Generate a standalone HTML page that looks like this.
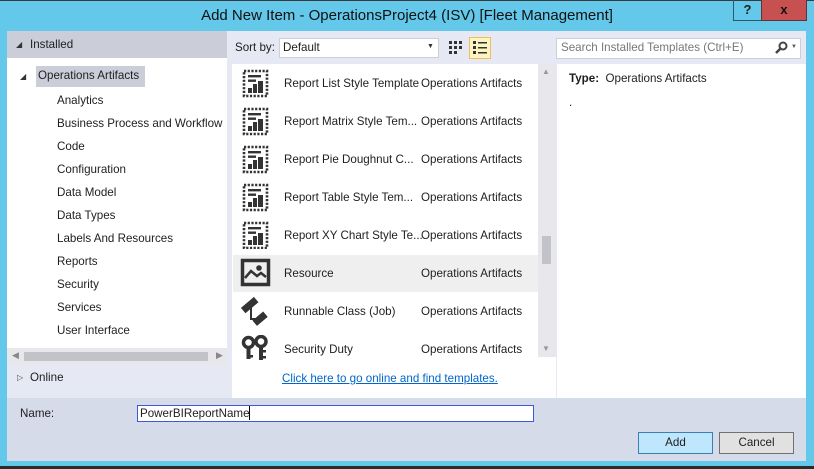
<!DOCTYPE html>
<html><head><meta charset="utf-8"><style>
*{margin:0;padding:0;box-sizing:border-box}
body{width:814px;height:469px;overflow:hidden;background:#63c8e9;font-family:"Liberation Sans",sans-serif;font-size:11.6px;color:#1e1e1e;position:relative}
.a{position:absolute}
.t{position:absolute;white-space:nowrap}
</style></head><body>
<div class="a" style="left:0;top:0;width:814px;height:1px;background:#3a3a3a"></div>
<div class="a" style="left:0;top:466px;width:814px;height:3px;background:#2b2b2b"></div>
<div class="t" style="left:0;width:814px;top:7px;text-align:center;font-size:15px;color:#111">Add New Item - OperationsProject4 (ISV) [Fleet Management]</div>
<div class="a" style="left:733px;top:0;width:29px;height:21px;border:1px solid #2a5a6a;border-top:none;text-align:center;font-weight:bold;font-size:13px;line-height:20px">?</div>
<div class="a" style="left:761px;top:0;width:46px;height:21px;background:#c75050;border:1px solid #6a3030;border-top:none;text-align:center;font-weight:bold;font-size:13px;line-height:20px;color:#111">x</div>

<div class="a" style="left:7px;top:31px;width:799px;height:367px;background:#e6e9f3"></div>
<div class="a" style="left:7px;top:398px;width:799px;height:63px;background:#d5dbe8"></div>

<div class="a" style="left:7px;top:31px;width:220px;height:317px;background:#fff"></div>
<div class="a" style="left:7px;top:31px;width:220px;height:27px;background:#cbcdd9"></div>
<div class="t" style="left:16px;top:40px;font-size:8px;color:#333">◢</div>
<div class="t" style="left:30px;top:38px">Installed</div>
<div class="a" style="left:36px;top:66px;width:109px;height:21px;background:#cbcdd9"></div>
<div class="t" style="left:20px;top:72px;font-size:8px;color:#333">◢</div>
<div class="t" style="left:38px;top:69px">Operations Artifacts</div>
<div class="t" style="left:57px;top:89px;line-height:23px">Analytics<br>Business Process and Workflow<br>Code<br>Configuration<br>Data Model<br>Data Types<br>Labels And Resources<br>Reports<br>Security<br>Services<br>User Interface</div>
<div class="a" style="left:7px;top:348px;width:220px;height:17px;background:#e8e8ec"></div>
<div class="a" style="left:24px;top:352px;width:184px;height:9px;background:#c2c3c9"></div>
<div class="t" style="left:12px;top:350px;font-size:9px;color:#888">◀</div>
<div class="t" style="left:216px;top:350px;font-size:9px;color:#888">▶</div>
<div class="t" style="left:17px;top:373px;font-size:8px;color:#444">▷</div>
<div class="t" style="left:30px;top:371px">Online</div>

<div class="t" style="left:235px;top:41px">Sort by:</div>
<div class="a" style="left:279px;top:38px;width:160px;height:20px;background:#fff;border:1px solid #ccced8"></div>
<div class="t" style="left:283px;top:41px">Default</div>
<div class="t" style="left:427px;top:43px;font-size:7px;color:#333">▼</div>
<svg class="a" style="left:448px;top:40px" width="16" height="16"><g fill="#333"><rect x="1" y="1" width="3" height="3"/><rect x="6" y="1" width="3" height="3"/><rect x="11" y="1" width="3" height="3"/><rect x="1" y="6" width="3" height="3"/><rect x="6" y="6" width="3" height="3"/><rect x="11" y="6" width="3" height="3"/><rect x="1" y="11" width="3" height="3"/><rect x="6" y="11" width="3" height="3"/></g></svg>
<div class="a" style="left:469px;top:37px;width:22px;height:22px;background:#fdf4bf;border:1px solid #e5c365"></div>
<svg class="a" style="left:472px;top:40px" width="16" height="16"><g fill="#333"><rect x="1" y="1" width="3" height="3"/><rect x="6" y="2" width="9" height="1.5"/><rect x="1" y="6" width="3" height="3"/><rect x="6" y="7" width="9" height="1.5"/><rect x="1" y="11" width="3" height="3"/><rect x="6" y="12" width="9" height="1.5"/></g></svg>

<div class="a" style="left:232px;top:64px;width:324px;height:334px;background:#fff"></div>
<div class="a" style="left:233px;top:255px;width:305px;height:37px;background:#efefef"></div>
<div class="a" style="left:538px;top:64px;width:18px;height:293px;background:#e8e8ec"></div>
<div class="t" style="left:542px;top:67px;font-size:8px;color:#999">▲</div>
<div class="t" style="left:542px;top:344px;font-size:8px;color:#999">▼</div>
<div class="a" style="left:542px;top:236px;width:9px;height:28px;background:#c2c3c9"></div>

<svg class="a" style="left:241px;top:69px" width="32" height="180">
<defs><g id="r"><rect x="3" y="2" width="23" height="25" fill="none" stroke="#333" stroke-width="2.6" stroke-dasharray="2.2 1.5"/><rect x="7" y="6" width="13" height="2.4" fill="#333"/><rect x="7" y="10.5" width="8" height="2.4" fill="#333"/><rect x="7" y="19" width="4" height="5" fill="#333"/><rect x="12" y="15" width="4" height="9" fill="#333"/><rect x="17" y="12" width="5" height="12" fill="#333"/></g></defs>
<use href="#r" x="0" y="0"/><use href="#r" x="0" y="38"/><use href="#r" x="0" y="76"/><use href="#r" x="0" y="114"/><use href="#r" x="0" y="152"/>
</svg>
<svg class="a" style="left:240px;top:258px" width="32" height="30"><rect x="2.5" y="2.5" width="26" height="24" fill="none" stroke="#333" stroke-width="3.5"/><path d="M5 20 L11 13 L17 18 L21 15 L26 19" fill="none" stroke="#333" stroke-width="2.5"/><circle cx="19" cy="10" r="2.8" fill="#333"/></svg>
<svg class="a" style="left:239px;top:295px" width="32" height="34"><rect x="2" y="7" width="17" height="7" transform="rotate(-40 10 10)" fill="#333"/><path d="M12 12 V24 H19" fill="none" stroke="#333" stroke-width="2"/><rect x="14" y="21" width="14" height="7" transform="rotate(-40 20 24)" fill="#333"/></svg>
<svg class="a" style="left:241px;top:335px" width="30" height="28"><circle cx="7.5" cy="7.5" r="5" fill="none" stroke="#333" stroke-width="3.5"/><rect x="5.5" y="11" width="4" height="13" fill="#333"/><rect x="8" y="20" width="4" height="2.5" fill="#333"/><circle cx="20" cy="6.5" r="5" fill="none" stroke="#333" stroke-width="3.5"/><rect x="18" y="10" width="4" height="15" fill="#333"/><rect x="21" y="15" width="4" height="2.5" fill="#333"/><rect x="21" y="21" width="4" height="2.5" fill="#333"/></svg>

<div class="t" style="left:284px;top:65px;line-height:38px">Report List Style Template<br>Report Matrix Style Tem...<br>Report Pie Doughnut C...<br>Report Table Style Tem...<br>Report XY Chart Style Te...<br>Resource<br>Runnable Class (Job)<br>Security Duty</div>
<div class="t" style="left:421px;top:65px;line-height:38px;background:transparent">Operations Artifacts<br>Operations Artifacts<br>Operations Artifacts<br>Operations Artifacts<br>Operations Artifacts<br>Operations Artifacts<br>Operations Artifacts<br>Operations Artifacts</div>
<div class="t" style="left:282px;top:372px;color:#0066cc;text-decoration:underline">Click here to go online and find templates.</div>

<div class="a" style="left:556px;top:38px;width:245px;height:21px;background:#fff;border:1px solid #ccced8"></div>
<div class="t" style="left:561px;top:41px;color:#777">Search Installed Templates (Ctrl+E)</div>
<svg class="a" style="left:774px;top:41px" width="14" height="14"><circle cx="9" cy="5" r="3.5" fill="none" stroke="#444" stroke-width="2"/><path d="M7 7 L2 12" stroke="#444" stroke-width="2.5"/></svg>
<div class="t" style="left:791px;top:44px;font-size:6px;color:#555">▼</div>
<div class="a" style="left:557px;top:64px;width:249px;height:334px;background:#fff"></div>
<div class="t" style="left:569px;top:72px"><b>Type:</b>&nbsp; Operations Artifacts</div>
<div class="t" style="left:569px;top:96px">.</div>

<div class="t" style="left:20px;top:407px">Name:</div>
<div class="a" style="left:137px;top:405px;width:397px;height:17px;background:#fff;border:1px solid #3c5ad6"></div>
<div class="t" style="left:140px;top:407px">PowerBIReportName</div>
<div class="a" style="left:249px;top:406px;width:1px;height:14px;background:#000"></div>
<div class="a" style="left:638px;top:432px;width:75px;height:22px;background:#bee6fd;border:1px solid #3c7fb1;text-align:center;line-height:20px">Add</div>
<div class="a" style="left:719px;top:432px;width:75px;height:22px;background:#e1e1e1;border:1px solid #707070;text-align:center;line-height:20px">Cancel</div>
</body></html>
